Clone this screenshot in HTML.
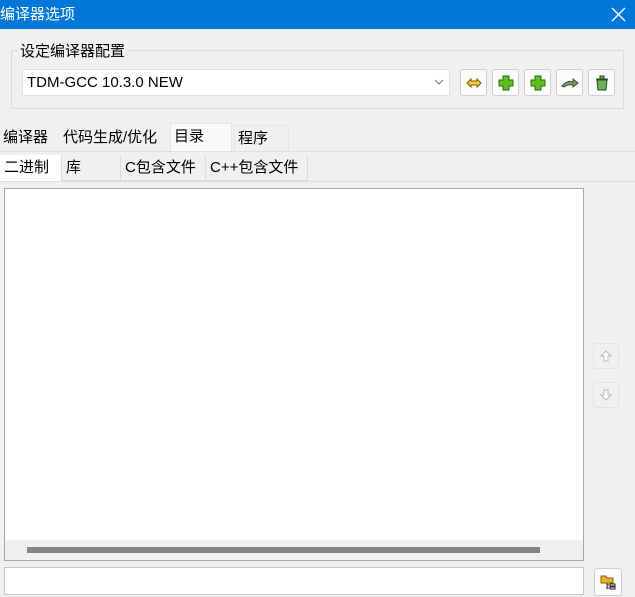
<!DOCTYPE html>
<html><head><meta charset="utf-8"><style>
*{margin:0;padding:0;box-sizing:border-box}
body{width:635px;height:597px;background:#f0f0f0;font-family:"Liberation Sans","Noto Sans CJK SC",sans-serif;font-size:15px;color:#000;position:relative;overflow:hidden}
.a{position:absolute}
.btn{position:absolute;width:27px;height:27px;border:1px solid #d0d0d0;border-radius:3px;background:#fbfbfb;display:flex;align-items:center;justify-content:center}
.tab{position:absolute;top:125px;height:26px;line-height:26px;padding-left:3px}
.st{position:absolute;top:155px;height:26px;line-height:26px;padding-left:4px;border-right:1px solid #dcdcdc;border-bottom:1px solid #dcdcdc}
</style></head><body>
<div class="a" style="left:0;top:0;width:635px;height:29px;background:#0078d7;color:#fff;font-size:15px;line-height:29px">编译器选项</div>
<svg class="a" style="left:611px;top:7px" width="15" height="15"><path d="M1 1l13 13M14 1L1 14" stroke="#fff" stroke-width="1.3"/></svg>
<div class="a" style="left:11px;top:50px;width:613px;height:59px;border:1px solid #dcdcdc"></div>
<div class="a" style="left:18px;top:42px;background:#f0f0f0;padding:0 2px;line-height:20px">设定编译器配置</div>
<div class="a" style="left:22px;top:69px;width:428px;height:27px;background:#fff;border:1px solid #e0e0e0;line-height:25px;padding-left:4px">TDM-GCC 10.3.0 NEW</div>
<svg class="a" style="left:434px;top:79px" width="10" height="6"><path d="M1 1l4 4 4-4" stroke="#777" fill="none"/></svg>
<div class="btn" style="left:460px;top:69px"><svg width="18" height="14"><path d="M2 7l4-4v2h6V3l4 4-4 4V9H6v2z" fill="#e8d040" stroke="#806000"/></svg></div>
<div class="btn" style="left:492px;top:69px"><svg width="16" height="16"><path d="M5 1h6v4h4v6h-4v4H5v-4H1V5h4z" fill="#5cc020" stroke="#2a6a10"/></svg></div>
<div class="btn" style="left:524px;top:69px"><svg width="16" height="16"><path d="M5 1h6v4h4v6h-4v4H5v-4H1V5h4z" fill="#5cc020" stroke="#2a6a10"/></svg></div>
<div class="btn" style="left:556px;top:69px"><svg width="18" height="12"><path d="M1 9q5-6 11-4V2l5 4-5 4V8q-5-1-9 2z" fill="#7a9a70" stroke="#3a5030"/></svg></div>
<div class="btn" style="left:588px;top:69px"><svg width="14" height="17"><path d="M1 5h12M5 5V2h4v3M2 6l1 10h8l1-10z" fill="#6cae5a" stroke="#254a20"/></svg></div>
<div class="tab" style="left:0">编译器</div>
<div class="tab" style="left:60px">代码生成/优化</div>
<div class="tab" style="left:170px;top:123px;width:62px;height:29px;background:#f9f9f9;border:1px solid #e6e6e6;border-bottom:none">目录</div>
<div class="tab" style="left:234px;width:55px;border:1px solid #e6e6e6;border-bottom:none">程序</div>
<div class="a" style="left:0;top:151px;width:635px;height:1px;background:#e0e0e0"></div>
<div class="st" style="left:0;width:62px;background:#fff;border-bottom:none">二进制</div>
<div class="st" style="left:62px;width:59px">库</div>
<div class="st" style="left:121px;width:85px">C包含文件</div>
<div class="st" style="left:206px;width:102px">C++包含文件</div>
<div class="a" style="left:0;top:181px;width:635px;height:1px;background:#dcdcdc"></div>
<div class="a" style="left:4px;top:188px;width:580px;height:373px;background:#fff;border:1px solid #a8a8a8"></div>
<div class="a" style="left:5px;top:540px;width:578px;height:20px;background:#f0f0f0"></div>
<div class="a" style="left:27px;top:547px;width:513px;height:6px;background:#858585"></div>
<div class="btn" style="left:593px;top:343px;width:26px;height:26px;background:#f0f0f0;border-color:#e4e4e4"><svg width="12" height="12"><path d="M6 1l5 5H8v5H4V6H1z" fill="#fff" stroke="#bbb"/></svg></div>
<div class="btn" style="left:593px;top:382px;width:26px;height:26px;background:#f0f0f0;border-color:#e4e4e4"><svg width="12" height="12"><path d="M6 11l5-5H8V1H4v5H1z" fill="#fff" stroke="#bbb"/></svg></div>
<div class="a" style="left:4px;top:567px;width:580px;height:28px;background:#fff;border:1px solid #c8c8c8"></div>
<div class="btn" style="left:594px;top:568px;width:28px;height:28px"><svg width="16" height="16"><path d="M1 2h5l1 2h6v5H1z" fill="#e8b030" stroke="#8a6010"/><path d="M7 9v6M7 11h2M7 14h2M10 10h5v2h-5zM10 13h5v2h-5z" stroke="#222" fill="none"/></svg></div>
</body></html>
